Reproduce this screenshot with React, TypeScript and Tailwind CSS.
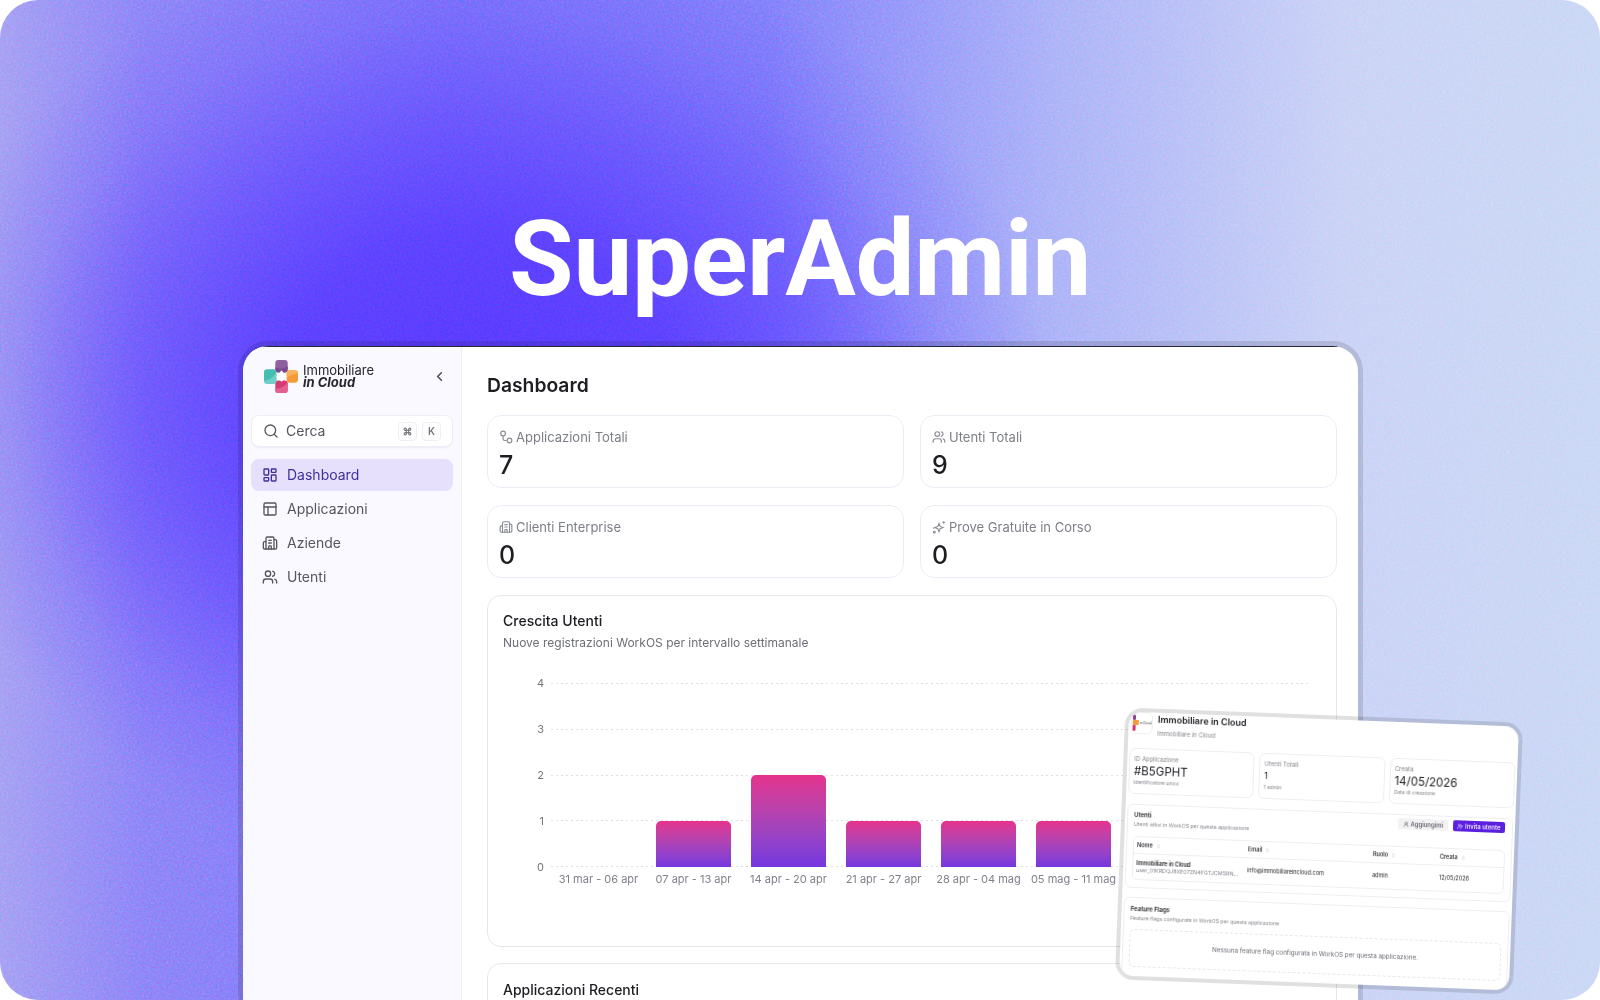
import React, { FC } from "react";
import {
  Building2,
  ChevronLeft,
  ChevronsUpDown,
  Command,
  LayoutDashboard,
  PanelsTopLeft,
  Search,
  UserPlus,
  UserRound,
  Users,
} from "lucide-react";

const inter = "font-['Inter',sans-serif]";

const Logo: FC = () => (
  <svg width="34" height="33" viewBox="0 0 33 32">
    <rect x="11" y="0" width="12" height="12" rx="3" fill="#8f5f9f" />
    <path d="M11 7c4 2 8 2 12-1v3a3 3 0 0 1-3 3h-6a3 3 0 0 1-3-3z" fill="#7b4a8c" />
    <rect x="11" y="20" width="12" height="12" rx="3" fill="#d63a72" />
    <path d="M11 28c4 0 8-2 12-6v7a3 3 0 0 1-3 3h-6a3 3 0 0 1-3-3z" fill="#e4608f" />
    <rect x="0" y="9" width="12" height="14" rx="3" fill="#45bdb1" />
    <path d="M0 20c5 0 8-3 12-8v8a3 3 0 0 1-3 3H3a3 3 0 0 1-3-3z" fill="#6fd0c6" />
    <rect x="22" y="10" width="11" height="12" rx="3" fill="#f59a3a" />
    <path d="M22 12a3 3 0 0 1 3-2h5a3 3 0 0 1 3 3c-4 0-7 1-11 4z" fill="#f8b25e" />
    <path d="M17 10l5 6-5 5-5-5z" fill="#ffffff" />
  </svg>
);

const AppsIcon: FC = () => (
  <svg width="14" height="14" viewBox="0 0 24 24" fill="none" stroke="currentColor" strokeWidth="2">
    <circle cx="7" cy="6" r="4" />
    <path d="M7 10v5a3 3 0 0 0 3 3h3" />
    <circle cx="18" cy="18" r="4" />
  </svg>
);

const TrialIcon: FC = () => (
  <svg width="14" height="14" viewBox="0 0 24 24" fill="none" stroke="currentColor" strokeWidth="2">
    <path d="M12 6l2 5 5 2-5 2-2 5-2-5-5-2 5-2z" />
    <path d="M20 2v4M18 4h4" />
    <circle cx="4" cy="21" r="1.5" />
    <path d="M3 13v2M2 14h2" />
  </svg>
);

const StatCard: FC<{ icon: React.ReactNode; label: string; value: string }> = ({ icon, label, value }) => (
  <div className="h-[73px] rounded-[14px] border border-[#e9edf3] bg-white px-[11px] pt-[11px]">
    <div className="flex items-center gap-[3px] text-[13px] leading-5 text-[#7d7f87]">
      <span className="text-[#8b8d95]">{icon}</span>
      {label}
    </div>
    <div className="mt-[2px] text-[25px] leading-8 font-medium text-[#1d1d22]">{value}</div>
  </div>
);

const NavItem: FC<{ icon: React.ReactNode; label: string; active?: boolean }> = ({ icon, label, active }) => (
  <div
    className={
      active
        ? "flex h-8 items-center gap-[9px] rounded-lg bg-[#e6e0fd] px-[11px] text-sm text-[#3f2f9b]"
        : "flex h-8 items-center gap-[9px] rounded-lg px-[11px] text-sm text-[#55565e]"
    }
  >
    {icon}
    {label}
  </div>
);

const bars = [
  { label: "31 mar - 06 apr", value: 0 },
  { label: "07 apr - 13 apr", value: 1 },
  { label: "14 apr - 20 apr", value: 2 },
  { label: "21 apr - 27 apr", value: 1 },
  { label: "28 apr - 04 mag", value: 1 },
  { label: "05 mag - 11 mag", value: 1 },
  { label: "12 mag - 18 mag", value: 1 },
  { label: "19 mag - 25 mag", value: 0 },
];

const Chart: FC = () => (
  <div className="mt-[26px] flex">
    <div className="flex h-[197px] w-[48px] flex-col justify-between pr-[7px] text-right text-[11px] leading-[13px] text-[#74757d]">
      <span>4</span>
      <span>3</span>
      <span>2</span>
      <span>1</span>
      <span>0</span>
    </div>
    <div className="w-[760px]">
      <div className="relative mt-[6px] h-[184px]">
        <div className="flex h-full flex-col justify-between">
          {[0, 1, 2, 3, 4].map((i) => (
            <div key={i} className="h-px bg-[repeating-linear-gradient(90deg,#dfe0e5_0_2px,transparent_2px_5px)]" />
          ))}
        </div>
        <div className="absolute inset-0 flex items-end">
          {bars.map((b) => (
            <div key={b.label} className="flex w-[95px] justify-center">
              {b.value > 0 && (
                <div
                  className="w-[75px] rounded-t-[5px] bg-gradient-to-b from-[#e5318c] to-[#7436df]"
                  style={{ height: b.value * 46 }}
                />
              )}
            </div>
          ))}
        </div>
      </div>
      <div className="mt-[5px] flex">
        {bars.map((b) => (
          <div key={b.label} className="w-[95px] text-center text-[11px] leading-[14px] whitespace-nowrap text-[#80818a]">
            {b.label}
          </div>
        ))}
      </div>
    </div>
  </div>
);

const MiniStat: FC<{ label: string; value: string; note: string; big?: boolean }> = ({ label, value, note, big }) => (
  <div className="h-[46px] flex-1 rounded-[6px] border border-[#eceef2] px-[4px] pt-[5px]">
    <div className="text-[6px] leading-[9px] text-[#85868d]">{label}</div>
    <div className={big ? "text-[11.5px] leading-[16px] text-[#1d1d22]" : "text-[9px] leading-[16px] text-[#1d1d22]"}>{value}</div>
    <div className="text-[5px] leading-[7px] text-[#85868d]">{note}</div>
  </div>
);

const MiniTh: FC<{ label: string; className: string }> = ({ label, className }) => (
  <div className={`flex items-center gap-[3px] ${className}`}>
    {label}
    <ChevronsUpDown size={5} className="text-[#9a9ba2]" />
  </div>
);

const MiniCard: FC = () => (
  <div className="absolute left-[1120px] top-[715px] h-[272px] w-[398px] rotate-[2.2deg] overflow-hidden rounded-[18px] border-[4px] border-black/[0.12] bg-white bg-clip-padding px-[2px] text-[#1d1d22] blur-[0.4px]">
    <div className="flex h-[36px] items-start gap-[5px]">
      <div className="flex h-[22px] w-[22px] shrink-0 items-center gap-[1px] overflow-hidden rounded-[5px] border border-[#eceef2] pl-[1px]">
        <div className="flex flex-col">
          <span className="h-[5px] w-[3px] rounded-[1px] bg-[#8f3f8f]" />
          <span className="h-[5px] w-[6px] rounded-[1px] bg-[#f59a3a]" />
          <span className="h-[6px] w-[3px] rounded-[1px] bg-[#d6326e]" />
        </div>
        <span className="text-[3px] leading-[3px] text-[#333]">in Cloud</span>
      </div>
      <div>
        <div className="text-[9px] leading-[13px] font-semibold">Immobiliare in Cloud</div>
        <div className="mt-[3px] text-[6px] leading-[9px] text-[#85868d]">Immobiliare in Cloud</div>
      </div>
    </div>
    <div className="flex gap-[5px]">
      <MiniStat label="ID Applicazione" value="#B5GPHT" note="Identificatore unico" big />
      <MiniStat label="Utenti Totali" value="1" note="1 admin" />
      <MiniStat label="Creata" value="14/05/2026" note="Data di creazione" big />
    </div>
    <div className="mt-[10px] h-[84px] rounded-[6px] border border-[#eceef2] px-[6px] pt-[5px]">
      <div className="flex items-start justify-between pr-[1px]">
        <div>
          <div className="text-[6px] leading-[9px] font-semibold">Utenti</div>
          <div className="mt-[1px] text-[5.2px] leading-[8px] text-[#85868d]">Utenti attivi in WorkOS per questa applicazione</div>
        </div>
        <div className="mt-[-2px] flex gap-[5px]">
          <div className="flex h-[11px] items-center gap-[2px] rounded-[2px] bg-[#f2f2f4] px-[4.5px] text-[6px] font-medium text-[#55565e]">
            <UserRound size={6} />
            Aggiungimi
          </div>
          <div className="flex h-[11px] items-center gap-[2px] rounded-[2px] bg-[#5b1fe0] px-[4.5px] text-[6px] font-medium text-white">
            <UserPlus size={6} />
            Invita utente
          </div>
        </div>
      </div>
      <div className="mt-[8px] h-[44px] rounded-[5px] border border-[#eceef2] text-[5.5px]">
        <div className="flex h-[17px] items-center border-b border-[#eceef2] px-[3px] font-semibold text-[#33343a]">
          <MiniTh label="Nome" className="w-[111px]" />
          <MiniTh label="Email" className="w-[125px]" />
          <MiniTh label="Ruolo" className="w-[67px]" />
          <MiniTh label="Creata" className="w-[60px]" />
        </div>
        <div className="flex h-[25px] items-center px-[3px]">
          <div className="w-[111px]">
            <div className="leading-[8px] font-semibold">Immobiliare in Cloud</div>
            <div className="text-[5.4px] leading-[7px] text-[#85868d]">user_01KRDQJ8XE07ZN4FGTJCMSRN...</div>
          </div>
          <div className="w-[125px]">info@immobiliareincloud.com</div>
          <div className="w-[67px]">admin</div>
          <div className="w-[60px]">12/05/2026</div>
        </div>
      </div>
    </div>
    <div className="mt-[9px] h-[90px] rounded-[6px] border border-[#eceef2] px-[6px] pt-[6px]">
      <div className="text-[6px] leading-[9px] font-semibold">Feature Flags</div>
      <div className="mt-[1px] text-[5.2px] leading-[8px] text-[#85868d]">Feature flags configurate in WorkOS per questa applicazione</div>
      <div className="mt-[7px] flex h-[38px] items-center justify-center rounded-[5px] border border-dashed border-[#e6e7ec] text-[6.3px] text-[#6a6b73]">
        Nessuna feature flag configurata in WorkOS per questa applicazione.
      </div>
    </div>
  </div>
);

const App: FC = () => {
  return (
    <div className="h-screen w-full overflow-hidden bg-white">
      <div className="relative h-[1000px] w-[1600px] overflow-hidden rounded-[38px] bg-[radial-gradient(ellipse_570px_470px_at_480px_400px,#5636ff_0%,#5a3fff_35%,rgba(90,63,255,0.6)_60%,rgba(90,63,255,0.2)_82%,rgba(90,63,255,0)_100%),linear-gradient(90deg,#a39cf3_0%,#8a7ff8_9%,#7a70fb_28%,#7f7cfb_48%,#aab0f8_66%,#c9d1f6_84%,#c9d6f5_100%)]">
        <svg className="pointer-events-none absolute inset-0 opacity-30 mix-blend-overlay" width="1600" height="1000">
          <filter id="grain">
            <feTurbulence type="fractalNoise" baseFrequency="0.45" numOctaves="2" seed="4" />
            <feColorMatrix type="saturate" values="3" />
          </filter>
          <rect width="1600" height="1000" filter="url(#grain)" />
        </svg>

        <h1 className="relative pt-[197px] text-center font-['Roboto',sans-serif] text-[105px] leading-[126px] font-bold tracking-[-0.3px] text-white">
          SuperAdmin
        </h1>

        <div className={`relative mt-[18px] ml-[238px] flex h-[700px] w-[1125px] flex-col overflow-hidden rounded-[30px] border-[5px] border-black/[0.12] bg-white bg-clip-padding blur-[0.3px] ${inter}`}>
          <div className="mx-[20px] h-px shrink-0 bg-[#26263a]" />
          <div className="flex flex-1">
            <aside className="w-[219px] shrink-0 border-r border-[#eeeef6] bg-[#faf9ff] px-2">
              <div className="flex h-[68px] items-center pb-[10px] pl-[13px]">
                <Logo />
                <div className="ml-[5px] text-[13px] leading-[12px] text-[#26262c]">
                  <div>Immobiliare</div>
                  <div className="font-bold italic">in Cloud</div>
                </div>
                <ChevronLeft size={15} strokeWidth={2.5} className="ml-[58px] text-[#4b4c54]" />
              </div>
              <div className="flex h-[32px] items-center rounded-lg border border-[#eeeef4] bg-white px-[11px] text-sm text-[#55565e] shadow-[0_1px_2px_rgba(30,30,80,0.06)]">
                <Search size={16} />
                <span className="ml-[7px] flex-1">Cerca</span>
                <span className="flex h-[19px] w-[19px] items-center justify-center rounded border border-[#eeeef4]">
                  <Command size={9} strokeWidth={3} className="text-[#77787f]" />
                </span>
                <span className="ml-[5px] flex h-[19px] w-[19px] items-center justify-center rounded border border-[#eeeef4] text-[10px] font-semibold text-[#77787f]">
                  K
                </span>
              </div>
              <nav className="mt-3 flex flex-col gap-[2px]">
                <NavItem active icon={<LayoutDashboard size={16} />} label="Dashboard" />
                <NavItem icon={<PanelsTopLeft size={16} />} label="Applicazioni" />
                <NavItem icon={<Building2 size={16} />} label="Aziende" />
                <NavItem icon={<Users size={16} />} label="Utenti" />
              </nav>
            </aside>

            <main className="flex-1 pr-[21px] pl-[25px]">
              <h2 className="pt-[25px] text-[19.3px] leading-[26px] font-semibold text-[#1d1d22]">Dashboard</h2>
              <div className="mt-[17px] grid grid-cols-2 gap-x-[16px] gap-y-[17px]">
                <StatCard icon={<AppsIcon />} label="Applicazioni Totali" value="7" />
                <StatCard icon={<Users size={14} />} label="Utenti Totali" value="9" />
                <StatCard icon={<Building2 size={14} />} label="Clienti Enterprise" value="0" />
                <StatCard icon={<TrialIcon />} label="Prove Gratuite in Corso" value="0" />
              </div>
              <section className="mt-[17px] h-[352px] rounded-[14px] border border-[#e6e7ec] px-[15px] pt-[15px]">
                <h3 className="text-sm leading-5 font-medium text-[#1d1d22]">Crescita Utenti</h3>
                <p className="mt-[4px] text-xs leading-4 text-[#6d6e76]">Nuove registrazioni WorkOS per intervallo settimanale</p>
                <Chart />
              </section>
              <section className="mt-[16px] h-[120px] rounded-[14px] border border-[#e6e7ec] px-[15px] pt-[16px]">
                <h3 className="text-sm leading-5 font-medium text-[#1d1d22]">Applicazioni Recenti</h3>
              </section>
            </main>
          </div>
        </div>

        <div className={inter}>
          <MiniCard />
        </div>
      </div>
    </div>
  );
};

export default App;
